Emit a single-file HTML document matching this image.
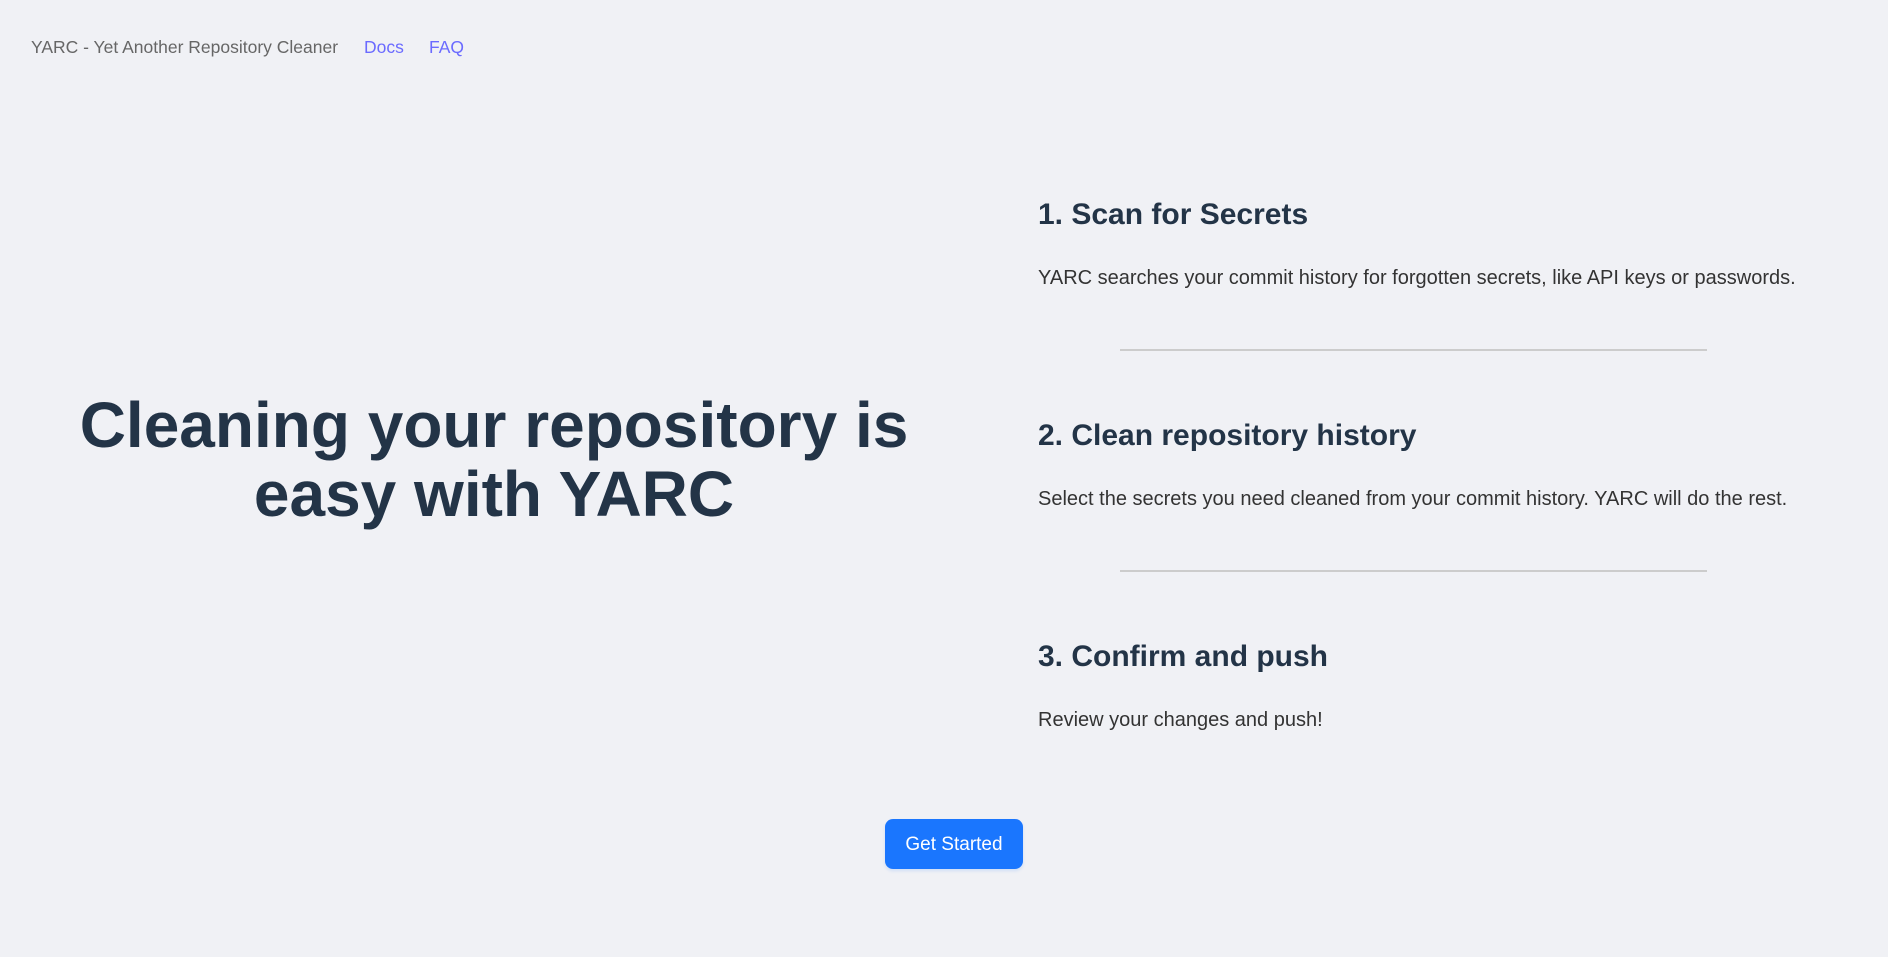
<!DOCTYPE html>
<html><head><meta charset="utf-8"><style>
html,body{margin:0;padding:0;background:#f0f1f5;width:1888px;height:957px;overflow:hidden;font-family:"Liberation Sans",Arial,sans-serif}
.a{position:absolute;white-space:nowrap}
.nav{top:37px;font-size:17.5px;color:#666}
.nav.l{color:#6b6bff}
h1{position:absolute;margin:0;left:30px;width:928px;top:391px;text-align:center;font-size:64px;line-height:69px;font-weight:bold;color:#233447}
h2{position:absolute;margin:0;left:1038px;font-size:30px;font-weight:bold;color:#233447;line-height:36px}
p{position:absolute;margin:0;left:1038px;font-size:20px;color:#333;line-height:24px}
.hr{position:absolute;left:1120px;width:587px;height:2px;background:#ccc}
.btn{position:absolute;left:885px;top:819px;width:138px;height:50px;border-radius:8px;background:#1a76fe;color:#fff;font-size:19px;line-height:52px;text-align:center;box-shadow:0 2px 3px rgba(26,118,254,.15)}
</style></head><body>
<div class="a nav" style="left:31px">YARC - Yet Another Repository Cleaner</div>
<div class="a nav l" style="left:364px">Docs</div>
<div class="a nav l" style="left:429px">FAQ</div>
<h1>Cleaning your repository is<br>easy with YARC</h1>
<h2 style="top:197px">1. Scan for Secrets</h2>
<p style="top:266px">YARC searches your commit history for forgotten secrets, like API keys or passwords.</p>
<div class="hr" style="top:349px"></div>
<h2 style="top:418px">2. Clean repository history</h2>
<p style="top:487px">Select the secrets you need cleaned from your commit history. YARC will do the rest.</p>
<div class="hr" style="top:570px"></div>
<h2 style="top:639px">3. Confirm and push</h2>
<p style="top:708px">Review your changes and push!</p>
<div class="btn">Get Started</div>
</body></html>
